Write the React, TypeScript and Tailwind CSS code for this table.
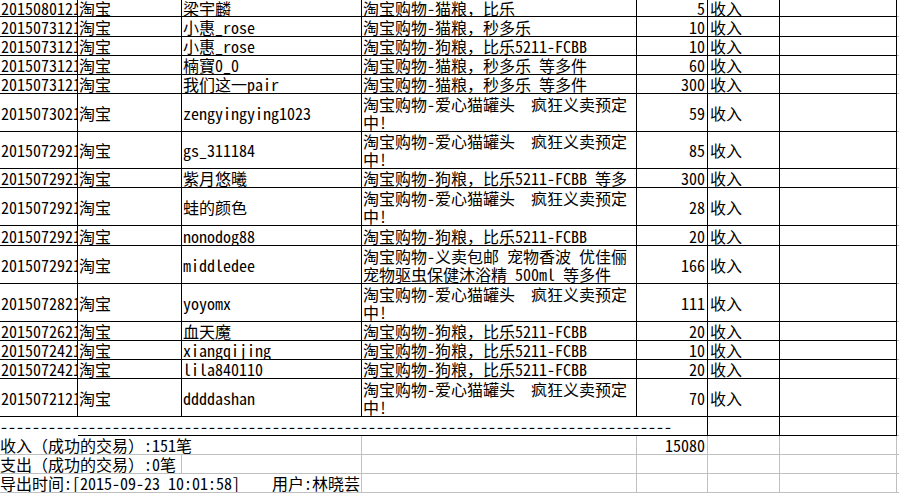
import React from "react";

type Row = {
  a: string;
  c: string;
  d: string[];
  e: string;
  h?: number;
};

const CAT = ["淘宝购物-爱心猫罐头  疯狂义卖预定", "中!"];
const DOG = ["淘宝购物-狗粮，比乐5211-FCBB"];

const rows: Row[] = [
  { a: "2015080121", c: "梁宇麟", d: ["淘宝购物-猫粮，比乐"], e: "5", h: 17 },
  { a: "2015073121", c: "小惠_rose", d: ["淘宝购物-猫粮，秒多乐"], e: "10", h: 20 },
  { a: "2015073121", c: "小惠_rose", d: DOG, e: "10" },
  { a: "2015073121", c: "楠寶0_0", d: ["淘宝购物-猫粮，秒多乐 等多件"], e: "60" },
  { a: "2015073121", c: "我们这一pair", d: ["淘宝购物-猫粮，秒多乐 等多件"], e: "300" },
  { a: "2015073021", c: "zengyingying1023", d: CAT, e: "59", h: 38 },
  { a: "2015072921", c: "gs_311184", d: CAT, e: "85", h: 37 },
  { a: "2015072921", c: "紫月悠曦", d: ["淘宝购物-狗粮，比乐5211-FCBB 等多"], e: "300" },
  { a: "2015072921", c: "蛙的颜色", d: CAT, e: "28", h: 38 },
  { a: "2015072921", c: "nonodog88", d: DOG, e: "20", h: 20 },
  {
    a: "2015072921",
    c: "middledee",
    d: ["淘宝购物-义卖包邮 宠物香波 优佳俪", "宠物驱虫保健沐浴精 500ml 等多件"],
    e: "166",
    h: 38,
  },
  { a: "2015072821", c: "yoyomx", d: CAT, e: "111", h: 38 },
  { a: "2015072621", c: "血天魔", d: DOG, e: "20" },
  { a: "2015072421", c: "xiangqijing", d: DOG, e: "10" },
  { a: "2015072421", c: "lila840110", d: DOG, e: "20" },
  { a: "2015072121", c: "ddddashan", d: CAT, e: "70", h: 38 },
];

const heights: Record<number, string> = {
  17: "h-[17px]",
  19: "h-[19px]",
  20: "h-[20px]",
  37: "h-[37px]",
  38: "h-[38px]",
};

const cell = "flex items-center overflow-hidden whitespace-pre border-b border-r border-black";
const grey = "flex items-center overflow-hidden whitespace-pre border-b border-r border-[#c0c0c0]";

function DataRow({ r }: { r: Row }) {
  const h = heights[r.h ?? 19];
  return (
    <div className={`flex ${h}`}>
      <div className={`${cell} w-[78px] pl-px`}>{r.a}</div>
      <div className={`${cell} w-[104px] pl-px`}>淘宝</div>
      <div className={`${cell} w-[180px] pl-px`}>{r.c}</div>
      <div className={`${cell} w-[275px] flex-col !items-start justify-center pl-px`}>
        {r.d.map((line, i) => (
          <div key={i}>{line}</div>
        ))}
      </div>
      <div className={`${cell} w-[71px] justify-end pr-[2px]`}>{r.e}</div>
      <div className={`${cell} w-[72px] pl-[2px]`}>收入</div>
      <div className={`${cell} w-[117px]`} />
      <div className="flex-1 border-b border-[#c0c0c0]" />
    </div>
  );
}

export default function App() {
  return (
    <div className="w-[899px] h-[493px] overflow-hidden bg-white text-black text-[16px] leading-[18px] font-['Noto_Sans_Mono_CJK_SC','Liberation_Mono','Noto_Sans_CJK_SC',monospace]">
      {rows.map((r, i) => (
        <DataRow key={i} r={r} />
      ))}

      {/* separator */}
      <div className="flex h-[19px]">
        <div className="flex w-[78px] items-center whitespace-pre border-b border-white">
          {"-".repeat(84)}
        </div>
        <div className="w-[559px] border-b border-black" />
        <div className={`${cell} w-[71px]`} />
        <div className={`${cell} w-[72px]`} />
        <div className={`${cell} w-[117px]`} />
        <div className="flex-1 border-b border-[#c0c0c0]" />
      </div>

      {/* totals */}
      <div className="flex h-[19px]">
        <div className={`${grey} w-[362px]`}>收入（成功的交易）:151笔</div>
        <div className={`${grey} w-[275px]`} />
        <div className={`${grey} w-[71px] justify-end pr-[2px]`}>15080</div>
        <div className={`${grey} w-[72px]`} />
        <div className={`${grey} w-[117px]`} />
        <div className="flex-1 border-b border-[#c0c0c0]" />
      </div>
      <div className="flex h-[19px]">
        <div className={`${grey} w-[182px]`}>支出（成功的交易）:0笔</div>
        <div className={`${grey} w-[180px]`} />
        <div className={`${grey} w-[275px]`} />
        <div className={`${grey} w-[71px]`} />
        <div className={`${grey} w-[72px]`} />
        <div className={`${grey} w-[117px]`} />
        <div className="flex-1 border-b border-[#c0c0c0]" />
      </div>
      <div className="flex h-[19px]">
        <div className={`${grey} w-[362px]`}>导出时间:[2015-09-23 10:01:58]    用户:林晓芸</div>
        <div className={`${grey} w-[275px]`} />
        <div className={`${grey} w-[71px]`} />
        <div className={`${grey} w-[72px]`} />
        <div className={`${grey} w-[117px]`} />
        <div className="flex-1 border-b border-[#c0c0c0]" />
      </div>
    </div>
  );
}
